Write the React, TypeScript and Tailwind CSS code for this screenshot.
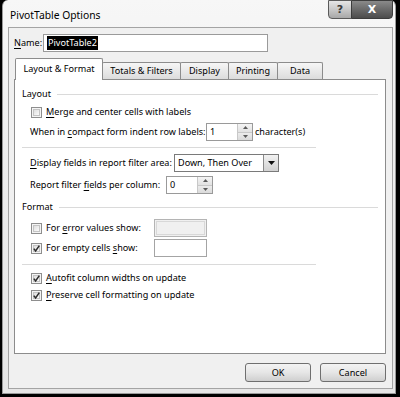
import React from "react";

const U = ({ c }: { c: string }) => (
  <span className="underline underline-offset-[1.5px] decoration-[1px]">{c}</span>
);

function Checkbox({ checked }: { checked?: boolean }) {
  return (
    <span className="relative w-[11px] h-[11px] shrink-0 border border-[#8e8e8e] bg-[#f4f4f4] p-[1px] flex">
      <span className="flex-1 border border-[#c4c4c4] bg-linear-to-br from-[#dedede] to-[#fbfbfb]" />
      {checked && (
        <svg className="absolute left-[0px] top-[0px]" width="9" height="9" viewBox="0 0 9 9">
          <path d="M1.8 4.6 L3.6 7 L7.3 1.6" stroke="#2c2c2c" strokeWidth="1.5" fill="none" />
        </svg>
      )}
    </span>
  );
}

function Spinner() {
  return (
    <span className="w-[15px] h-full flex flex-col border-l border-[#c8c8c8]">
      <span className="flex-1 flex items-center justify-center bg-linear-to-b from-[#f4f4f4] to-[#e2e2e2] border-b border-[#c8c8c8]">
        <svg width="5" height="3" viewBox="0 0 5 3"><path d="M0 3 L2.5 0 L5 3Z" fill="#5a5a5a" /></svg>
      </span>
      <span className="flex-1 flex items-center justify-center bg-linear-to-b from-[#ececec] to-[#dadada]">
        <svg width="5" height="3" viewBox="0 0 5 3"><path d="M0 0 L2.5 3 L5 0Z" fill="#5a5a5a" /></svg>
      </span>
    </span>
  );
}

function Sep() {
  return <div className="w-[294px] h-px bg-[#dadada]" />;
}

function Header({ label }: { label: string }) {
  return (
    <div className="h-[14px] flex items-center">
      <span>{label}</span>
      <span className="flex-1 h-px bg-[#dadada] ml-[6px]" />
    </div>
  );
}

function Tab({ label, w, selected }: { label: string; w: string; selected?: boolean }) {
  if (selected) {
    return (
      <div
        className={`${w} h-[22px] -mb-px relative z-10 bg-white border-x border-t border-[#8c8c8c] rounded-t-[2px] flex items-center justify-center pb-[1px]`}
      >
        {label}
      </div>
    );
  }
  return (
    <div
      className={`${w} h-[17px] -ml-px bg-linear-to-b from-[#f6f6f6] to-[#dcdcdc] border-x border-t border-[#8c8c8c] rounded-t-[2px] flex items-center justify-center`}
    >
      {label}
    </div>
  );
}

function Button({ label }: { label: string }) {
  return (
    <div className="w-[66px] h-[19px] rounded-[3px] border border-[#6f6f6f] bg-linear-to-b from-[#f3f3f3] via-[#e6e6e6] to-[#cfcfcf] flex items-center justify-center">
      {label}
    </div>
  );
}

export default function App() {
  return (
    <div className="w-[400px] h-[397px] bg-black pl-[2px] pr-[4px] pb-[3px] flex font-['Noto_Sans',sans-serif] text-[9.1px] leading-none text-black whitespace-nowrap">
      <div className="flex-1 flex flex-col rounded-t-[6px] bg-linear-to-b from-[#f7f7f7] via-[#ececec] to-[#e6e6e6] border-x border-b border-[#9a9a9a]">
        {/* Title bar */}
        <div className="h-[27px] flex items-start">
          <span className="ml-[7px] mt-[10px] text-[10.3px]">PivotTable Options</span>
          <div className="ml-auto mr-[2px] flex">
            <div className="w-[24px] h-[19px] rounded-bl-[4px] border border-[#5a5a5a] bg-linear-to-b from-[#e6e6e6] via-[#c8c8c8] to-[#a8a8a8] flex items-center justify-center font-['DejaVu_Sans',sans-serif] text-[11px] font-bold text-[#3a3a3a]">
              ?
            </div>
            <div className="w-[42px] h-[19px] -ml-px rounded-br-[4px] border border-[#3c3c3c] bg-linear-to-b from-[#8a8a8a] via-[#6a6a6a] to-[#4c4c4c] flex items-center justify-center font-['DejaVu_Sans',sans-serif] text-[11px] font-bold text-white">
              X
            </div>
          </div>
        </div>
        {/* Client */}
        <div className="ml-[5px] mr-[2px] mb-[4px] flex-1 border border-[#a4a4a4] bg-[#f0f0f0] flex flex-col">
          {/* Name row */}
          <div className="mt-[6px] ml-[5px] h-[18px] flex items-center">
            <span className="w-[29px]">
              <U c="N" />ame:
            </span>
            <div className="w-[225px] h-[18px] border border-[#9a9a9a] bg-white flex items-center pl-[3px]">
              <span className="bg-black text-white px-[1px] py-[2px]">PivotTable2</span>
            </div>
          </div>
          {/* Tabs */}
          <div className="mt-[6px] ml-[6px] h-[21px] flex items-end">
            <Tab label="Layout & Format" w="w-[88px]" selected />
            <Tab label="Totals & Filters" w="w-[79px]" />
            <Tab label="Display" w="w-[49px]" />
            <Tab label="Printing" w="w-[50px]" />
            <Tab label="Data" w="w-[46px]" />
          </div>
          {/* Panel */}
          <div className="ml-[5px] mr-[6px] h-[275px] border border-[#8c8c8c] bg-white px-[7px] pt-[7px] flex flex-col">
            <Header label="Layout" />
            <div className="pl-[9px] h-[22px] flex items-center gap-[4px]">
              <Checkbox />
              <span>
                <U c="M" />erge and center cells with labels
              </span>
            </div>
            <div className="pl-[8px] h-[18px] flex items-center">
              <span className="w-[176px]">
                When in <U c="c" />ompact form indent row labels:
              </span>
              <div className="w-[47px] h-[18px] border border-[#9a9a9a] bg-white flex items-center">
                <span className="flex-1 pl-[3px]">1</span>
                <Spinner />
              </div>
              <span className="ml-[2px]">character(s)</span>
            </div>
            <div className="pt-[6px] pb-[6px]">
              <Sep />
            </div>
            <div className="pl-[8px] h-[18px] flex items-center">
              <span className="w-[144px]">
                <U c="D" />isplay fields in report filter area:
              </span>
              <div className="w-[105px] h-[18px] border border-[#7a7a7a] bg-white flex items-center">
                <span className="flex-1 pl-[3px]">Down, Then Over</span>
                <span className="w-[15px] h-full border-l border-[#8a8a8a] bg-linear-to-b from-[#f2f2f2] to-[#d2d2d2] flex items-center justify-center">
                  <svg width="7" height="4" viewBox="0 0 7 4"><path d="M0 0 L3.5 4 L7 0Z" fill="#111" /></svg>
                </span>
              </div>
            </div>
            <div className="pl-[8px] mt-[4px] h-[18px] flex items-center">
              <span className="w-[136px]">
                Report filter <U c="f" />ields per column:
              </span>
              <div className="w-[47px] h-[18px] border border-[#9a9a9a] bg-white flex items-center">
                <span className="flex-1 pl-[3px]">0</span>
                <Spinner />
              </div>
            </div>
            <div className="mt-[6px]">
              <Header label="Format" />
            </div>
            <div className="pl-[9px] mt-[5px] h-[18px] flex items-center">
              <Checkbox />
              <span className="ml-[4px] w-[108px]">
                For <U c="e" />rror values show:
              </span>
              <div className="w-[53px] h-[18px] border border-[#b4b4b4] bg-[#f0f0f0] p-[1px] flex">
                <span className="flex-1 border border-[#d8d8d8]" />
              </div>
            </div>
            <div className="pl-[9px] mt-[2px] h-[18px] flex items-center">
              <Checkbox checked />
              <span className="ml-[4px] w-[108px]">
                For empty cells <U c="s" />how:
              </span>
              <div className="w-[53px] h-[18px] border border-[#a4a4a4] bg-white" />
            </div>
            <div className="pt-[7px] pb-[6px]">
              <Sep />
            </div>
            <div className="pl-[9px] h-[14px] flex items-center gap-[4px]">
              <Checkbox checked />
              <span>
                <U c="A" />utofit column widths on update
              </span>
            </div>
            <div className="pl-[9px] mt-[3px] h-[14px] flex items-center gap-[4px]">
              <Checkbox checked />
              <span>
                <U c="P" />reserve cell formatting on update
              </span>
            </div>
          </div>
          {/* Buttons */}
          <div className="mt-[9px] mr-[6px] flex justify-end gap-[9px]">
            <Button label="OK" />
            <Button label="Cancel" />
          </div>
        </div>
      </div>
    </div>
  );
}
